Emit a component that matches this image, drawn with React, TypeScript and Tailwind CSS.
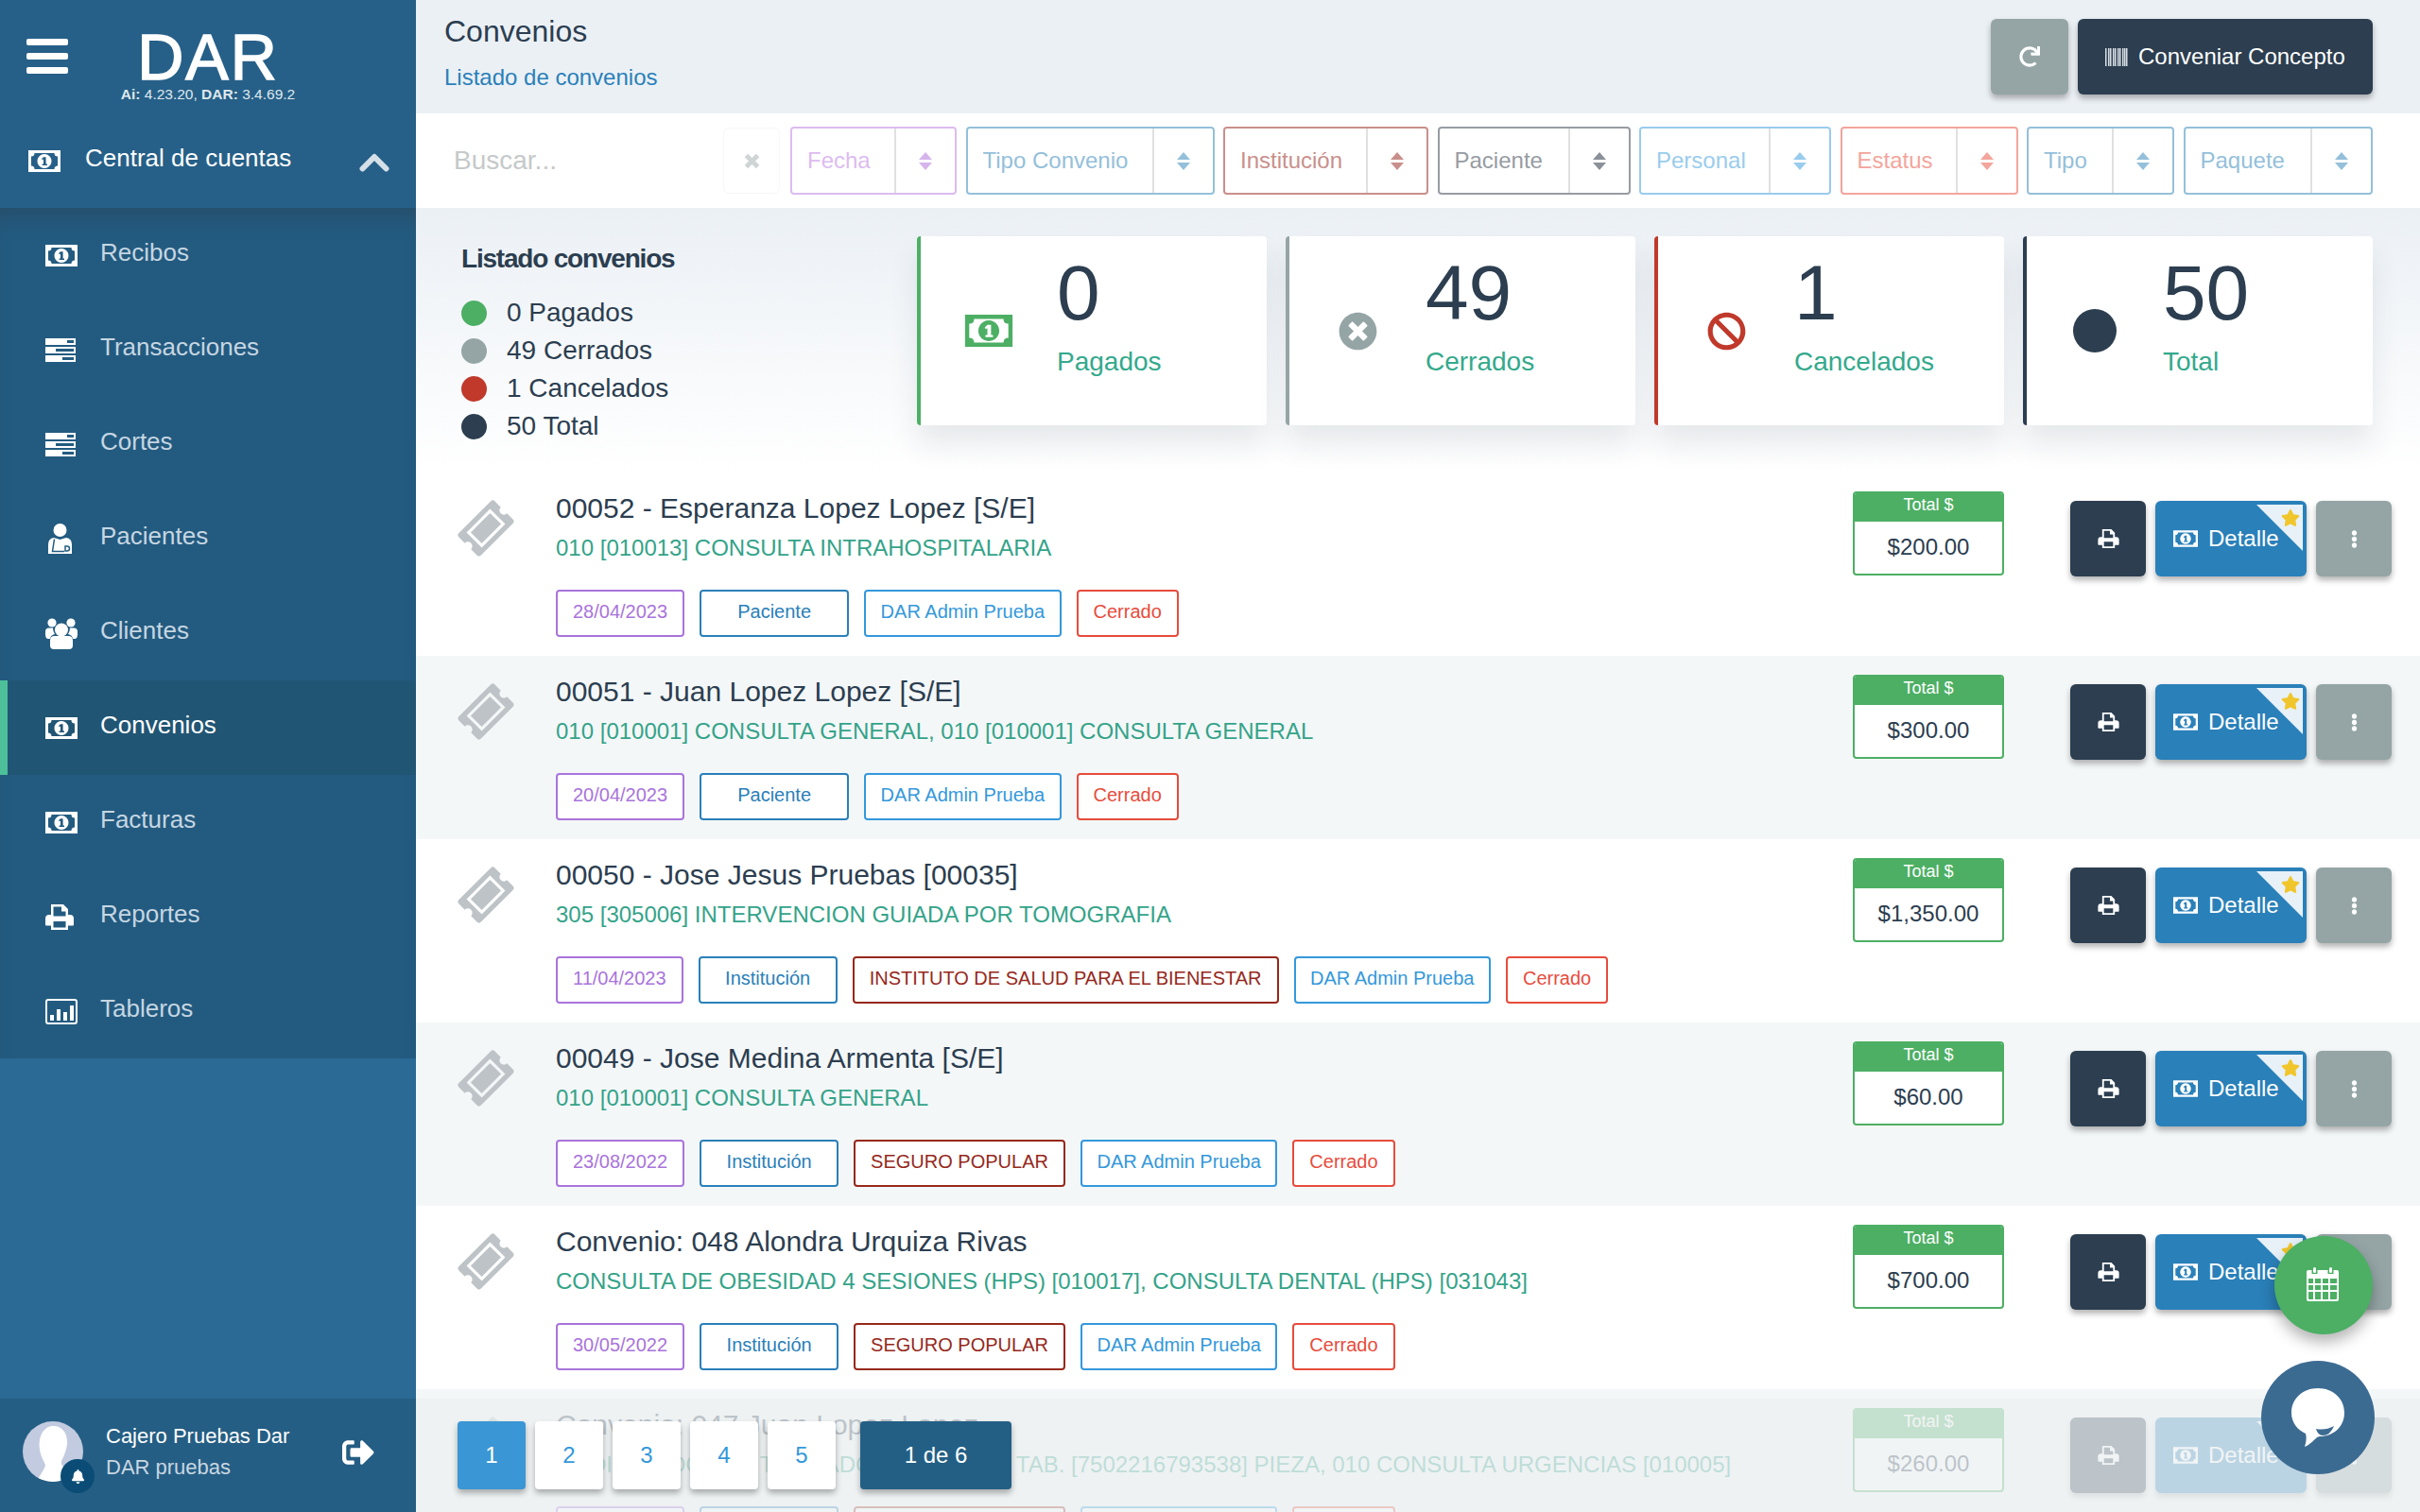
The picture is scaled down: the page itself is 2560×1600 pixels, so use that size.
import { FaBan, FaBell, FaEllipsisV, FaRedo, FaSignOutAlt, FaStar, FaTimesCircle } from "react-icons/fa";

const font = { fontFamily: '"Liberation Sans", Arial, sans-serif' };

const MoneyIcon = ({ className = "" }: { className?: string }) => (
  <svg viewBox="0 0 34 23" className={className} fill="currentColor" fillRule="evenodd">
    <path d="M0 0H34V23H0Z M6.5 3H27.5Q27.5 6.5 31 6.5V16.5Q27.5 16.5 27.5 20H6.5Q6.5 16.5 3 16.5V6.5Q6.5 6.5 6.5 3Z M17 4A7.5 7.5 0 1 1 16.99 4Z M16 7.2H18.6V14.6H20V16H14.6V14.6H16V9.6L14.8 10.3L14.1 9.1Z" />
  </svg>
);

const TasksIcon = () => (
  <svg viewBox="0 0 32 25" className="h-[25px] w-[32px]" fill="white" fillRule="evenodd">
    <path d="M0 0H32V7H0Z M23 2V5H30V2Z M0 9H32V16H0Z M11 11V14H30V11Z M0 18H32V25H0Z M18 20V23H30V20Z" />
  </svg>
);

const PatientIcon = () => (
  <svg viewBox="0 0 25 32" className="ml-[3px] h-[32px] w-[25px]">
    <circle cx="12.5" cy="7" r="7" fill="white" />
    <path d="M0 32V22Q0 16 6 15L12.5 17L19 15Q25 16 25 22V32Z" fill="white" />
    <path d="M6.5 16.5L4.5 29.5H17" fill="none" stroke="#235b80" strokeWidth="1.5" />
    <path d="M18 24H20A2.500 2.500 0 0 1 20 29H18Z" fill="white" stroke="#235b80" strokeWidth="1.5" />
  </svg>
);

const GroupIcon = () => (
  <svg viewBox="0 0 34 33" className="h-[33px] w-[34px]" fill="white">
    <circle cx="7" cy="5" r="4.6" />
    <circle cx="27" cy="5" r="4.6" />
    <circle cx="17" cy="12.5" r="7" />
    <path d="M0 14.5Q0 10.5 4 10.5H8Q8 14 10 17Q5.5 18 5 22H2.5Q0 21 0 18Z" />
    <path d="M34 14.5Q34 10.5 30 10.5H26Q26 14 24 17Q28.5 18 29 22H31.500Q34 21 34 18Z" />
    <path d="M5 24Q5 19 9.500 19H24.500Q29 19 29 24V29Q29 33 25 33H9Q5 33 5 29Z" />
  </svg>
);

const PrintIcon = ({ className = "" }: { className?: string }) => (
  <svg viewBox="0 0 30 27" className={className} fill="currentColor" fillRule="evenodd">
    <path d="M6 0H19L24 5V11H26Q30 11 30 15V21.500Q30 22.500 29 22.500H24V27H6V22.500H1Q0 22.500 0 21.500V15Q0 11 4 11H6Z M8.500 2.500V12.500H21.500V7.500H17V2.500Z M8.500 18V24.500H21.500V18Z" />
  </svg>
);

const ChartIcon = () => (
  <svg viewBox="0 0 34 27" className="h-[27px] w-[34px]" fill="white" fillRule="evenodd">
    <path d="M3 0H31Q34 0 34 3V24Q34 27 31 27H3Q0 27 0 24V3Q0 0 3 0Z M3 2A1 1 0 0 0 2 3V24A1 1 0 0 0 3 25H31A1 1 0 0 0 32 24V3A1 1 0 0 0 31 2Z M5 17H9V23H5Z M12 11H16V23H12Z M19 14H23V23H19Z M26 7H30V23H26Z" />
  </svg>
);

const TicketIcon = () => (
  <svg viewBox="1 1 58 58" className="h-[60px] w-[60px]" fill="#bdc3c7">
    <g transform="rotate(-45 30 30)">
      <path
        fillRule="evenodd"
        d="M7 14H53Q56 14 56 17V25.500A4.500 4.500 0 0 0 56 34.500V43Q56 46 53 46H7Q4 46 4 43V34.500A4.500 4.500 0 0 0 4 25.500V17Q4 14 7 14Z M13 19V41H47V19Z"
      />
      <rect x="16" y="22" width="28" height="16" />
    </g>
  </svg>
);

const Sort = ({ color }: { color: string }) => (
  <svg viewBox="0 0 14 19" className="h-[19px] w-[14px]" style={{ fill: color }}>
    <path d="M7 0L14 8H0Z M0 11H14L7 19Z" />
  </svg>
);

const BarcodeIcon = () => (
  <svg viewBox="0 0 24 19" className="h-[19px] w-[24px]">
    {[0, 3, 5, 8, 10, 13, 15, 18, 20, 22].map((x) => (
      <rect key={x} x={x} y="0" width="1.500" height="19" fill="#d5dde3" />
    ))}
  </svg>
);

const Calendar = () => (
  <svg viewBox="0 0 34 36" className="mb-[3px] mr-[2px] h-[36px] w-[34px]" fill="white" fillRule="evenodd">
    <rect x="7" y="0" width="3" height="6" rx="1.500" />
    <rect x="24" y="0" width="3" height="6" rx="1.500" />
    <path d="M2 3H5.500V7H11.500V3H22.500V7H28.500V3H32Q34 3 34 5V34Q34 36 32 36H2Q0 36 0 34V5Q0 3 2 3Z M2 12V17H7V12Z M9 12V17H15V12Z M17 12V17H23V12Z M25 12V17H32V12Z M2 19V24H7V19Z M9 19V24H15V19Z M17 19V24H23V19Z M25 19V24H32V19Z M2 26V33Q2 34 3 34H7V26Z M9 26V34H15V26Z M17 26V34H23V26Z M25 26V34H31Q32 34 32 33V26Z" />
  </svg>
);

const ChatBubble = () => (
  <svg viewBox="0 0 56 62" className="h-[62px] w-[56px]">
    <path d="M28 0C44 0 56 11 56 26C56 41 44 51 30 51C26 51 23 58 14 62C16 56 16 51 15 48C6 44 0 36 0 26C0 11 12 0 28 0Z" fill="white" />
    <path d="M26 43Q36 45 45 40Q41 50 33 50Q28 50 26 43Z" fill="#3c6b92" />
  </svg>
);

const Avatar = () => (
  <svg viewBox="0 0 64 64" className="h-[64px] w-[64px] rounded-full bg-[#c2cbdf]">
    <path d="M31 5C41 4 48 12 47 24C46 32 43 38 41 42C40 47 44 50 50 53L55 64H14C18 58 22 52 24 47C23 42 19 38 18 30C16 18 21 6 31 5Z" fill="white" />
  </svg>
);

const menu = [
  { label: "Recibos", icon: <MoneyIcon className="h-[23px] w-[34px] text-white" /> },
  { label: "Transacciones", icon: <TasksIcon /> },
  { label: "Cortes", icon: <TasksIcon /> },
  { label: "Pacientes", icon: <PatientIcon /> },
  { label: "Clientes", icon: <GroupIcon /> },
  { label: "Convenios", icon: <MoneyIcon className="h-[23px] w-[34px] text-white" />, active: true },
  { label: "Facturas", icon: <MoneyIcon className="h-[23px] w-[34px] text-white" /> },
  { label: "Reportes", icon: <PrintIcon className="h-[27px] w-[30px] text-white" /> },
  { label: "Tableros", icon: <ChartIcon /> },
];

const filters = [
  { label: "Fecha", w: "w-[176px]", border: "border-[#dcbcf0]", text: "text-[#dcbcf0]", color: "#d5b4ec" },
  { label: "Tipo Convenio", w: "w-[263px]", border: "border-[#94c0da]", text: "text-[#94c0da]", color: "#94c0da" },
  { label: "Institución", w: "w-[217px]", border: "border-[#c98f8b]", text: "text-[#c98f8b]", color: "#c98f8b" },
  { label: "Paciente", w: "w-[204px]", border: "border-[#979ca3]", text: "text-[#979ca3]", color: "#8b9199" },
  { label: "Personal", w: "w-[203px]", border: "border-[#99cced]", text: "text-[#99cced]", color: "#99cced" },
  { label: "Estatus", w: "w-[188px]", border: "border-[#f3a59c]", text: "text-[#f3a59c]", color: "#f3a59c" },
  { label: "Tipo", w: "w-[156px]", border: "border-[#94c0da]", text: "text-[#94c0da]", color: "#94c0da" },
  { label: "Paquete", w: "w-[200px]", border: "border-[#94c0da]", text: "text-[#94c0da]", color: "#94c0da" },
];

const legend = [
  { label: "0 Pagados", color: "bg-[#4caf64]" },
  { label: "49 Cerrados", color: "bg-[#95a5a6]" },
  { label: "1 Cancelados", color: "bg-[#c0392b]" },
  { label: "50 Total", color: "bg-[#2c3e50]" },
];

const cards = [
  { value: "0", label: "Pagados", border: "border-[#4caf64]", icon: <MoneyIcon className="h-[34px] w-[52px] text-[#4caf64]" /> },
  { value: "49", label: "Cerrados", border: "border-[#95a5a6]", icon: <FaTimesCircle className="text-[41px] text-[#95a5a6]" /> },
  { value: "1", label: "Cancelados", border: "border-[#c0392b]", icon: <FaBan className="text-[41px] text-[#c0392b]" /> },
  { value: "50", label: "Total", border: "border-[#2c3e50]", icon: <div className="h-[46px] w-[46px] rounded-full bg-[#2c3e50]" /> },
];

const tagStyles: Record<string, string> = {
  date: "border-[#a974db] text-[#a974db] px-[16px]",
  kind: "border-[#2a80b9] text-[#2a80b9] px-[16px]",
  inst: "border-[#96281b] text-[#96281b] px-[16px]",
  admin: "border-[#3498db] text-[#3498db] px-[15.500px]",
  state: "border-[#e74c3c] text-[#e74c3c] px-[16px]",
};

type Row = {
  title: string;
  sub: string;
  date: string;
  kind: string;
  inst?: string;
  total: string;
};

const rows: Row[] = [
  { title: "00052 - Esperanza Lopez Lopez [S/E]", sub: "010 [010013] CONSULTA INTRAHOSPITALARIA", date: "28/04/2023", kind: "Paciente", total: "$200.00" },
  { title: "00051 - Juan Lopez Lopez [S/E]", sub: "010 [010001] CONSULTA GENERAL, 010 [010001] CONSULTA GENERAL", date: "20/04/2023", kind: "Paciente", total: "$300.00" },
  { title: "00050 - Jose Jesus Pruebas [00035]", sub: "305 [305006] INTERVENCION GUIADA POR TOMOGRAFIA", date: "11/04/2023", kind: "Institución", inst: "INSTITUTO DE SALUD PARA EL BIENESTAR", total: "$1,350.00" },
  { title: "00049 - Jose Medina Armenta [S/E]", sub: "010 [010001] CONSULTA GENERAL", date: "23/08/2022", kind: "Institución", inst: "SEGURO POPULAR", total: "$60.00" },
  { title: "Convenio: 048 Alondra Urquiza Rivas", sub: "CONSULTA DE OBESIDAD 4 SESIONES (HPS) [010017], CONSULTA DENTAL (HPS) [031043]", date: "30/05/2022", kind: "Institución", inst: "SEGURO POPULAR", total: "$700.00" },
  { title: "Convenio: 047 Juan Lopez Lopez", sub: "MEDIA LIDOCAINA TRAMADOL 20 MG SOL TAB. [7502216793538] PIEZA, 010 CONSULTA URGENCIAS [010005]", date: "28/05/2022", kind: "Institución", inst: "SEGURO POPULAR", total: "$260.00" },
];

const Tag = ({ kind, children, className = "" }: { kind: string; children: string; className?: string }) => (
  <div className={`flex h-[50px] items-center justify-center rounded-[4px] border-2 bg-white pb-[4px] text-[20px] ${tagStyles[kind]} ${className}`}>
    {children}
  </div>
);

const ConvenioRow = ({ row, odd }: { row: Row; odd: boolean }) => (
  <div className={`flex h-[194px] shrink-0 items-start pr-[30px] ${odd ? "bg-[#f4f7f8]" : "bg-white"}`}>
    <div className="ml-[44px] mt-[29px] shrink-0">
      <TicketIcon />
    </div>
    <div className="ml-[44px] min-w-0 flex-1 pt-[20px]">
      <div className="text-[30px] leading-[36px] text-[#2c3e50]">{row.title}</div>
      <div className="mt-[9px] text-[24px] leading-[30px] text-[#34a389]">{row.sub}</div>
      <div className="mt-[29px] flex gap-[16px]">
        <Tag kind="date">{row.date}</Tag>
        <Tag kind="kind" className={row.kind === "Paciente" ? "w-[158px]" : "w-[147px]"}>{row.kind}</Tag>
        {row.inst && <Tag kind="inst">{row.inst}</Tag>}
        <Tag kind="admin">DAR Admin Prueba</Tag>
        <Tag kind="state">Cerrado</Tag>
      </div>
    </div>
    <div className="mt-[20px] h-[89px] w-[160px] shrink-0 overflow-hidden rounded-[4px] border-2 border-[#4caf64] bg-white">
      <div className="flex h-[30px] items-center justify-center bg-[#4caf64] pb-[6px] text-[18px] text-white">Total $</div>
      <div className="flex h-[55px] items-center justify-center pb-[2px] text-[24px] text-[#2c3e50]">{row.total}</div>
    </div>
    <div className="ml-[70px] mt-[30px] flex shrink-0 gap-[10px]">
      <div className="flex h-[80px] w-[80px] items-center justify-center rounded-[6px] bg-[#2c3e50] text-white shadow-[0_4px_6px_rgba(0,0,0,0.3)]">
        <PrintIcon className="h-[20px] w-[23px]" />
      </div>
      <div className="relative flex h-[80px] w-[160px] items-center gap-[11px] rounded-[6px] bg-[#2a80b9] pl-[19px] text-[24px] text-white shadow-[0_4px_6px_rgba(0,0,0,0.3)]">
        <MoneyIcon className="h-[18px] w-[26px]" />
        <span>Detalle</span>
        <svg viewBox="0 0 49 49" className="absolute right-[4px] top-[4px] h-[49px] w-[49px]">
          <path d="M0 0H49V49Z" fill="#e8f1f8" />
        </svg>
        <FaStar className="absolute right-[7px] top-[8px] text-[20px] text-[#f1c62c]" />
      </div>
      <div className="flex h-[80px] w-[80px] items-center justify-center rounded-[6px] bg-[#95a5a5] text-white shadow-[0_4px_6px_rgba(0,0,0,0.3)]">
        <FaEllipsisV className="text-[19px]" />
      </div>
    </div>
  </div>
);

export default function App() {
  return (
    <div className="relative flex h-screen w-full overflow-hidden bg-white" style={font}>
      <aside className="flex w-[440px] shrink-0 flex-col bg-[#2a6a95] text-white">
        <div className="bg-[#266088]">
          <div className="flex h-[120px] items-start">
            <div className="ml-[28px] mt-[41px] flex w-[44px] flex-col gap-[8px]">
              <div className="h-[7px] rounded-[2px] bg-white" />
              <div className="h-[7px] rounded-[2px] bg-white" />
              <div className="h-[7px] rounded-[2px] bg-white" />
            </div>
            <div className="ml-[48px] w-[200px] text-center">
              <div className="mt-[36px] text-[68px] leading-[48px] tracking-[2px] text-white [-webkit-text-stroke:1.5px_white]">DAR</div>
              <div className="mt-[6px] text-[15.500px] leading-[20px] text-[#dfe8ee]">
                <b>Ai:</b> 4.23.20, <b>DAR:</b> 3.4.69.2
              </div>
            </div>
          </div>
          <div className="flex h-[100px] items-center pb-[6px] pl-[30px] pr-[28px]">
            <MoneyIcon className="mt-[6px] h-[23px] w-[34px] text-white" />
            <span className="ml-[26px] flex-1 text-[26px] leading-[30px]">Central de cuentas</span>
            <svg viewBox="0 0 32 20" className="mt-[10px] h-[20px] w-[32px]" fill="none" stroke="#d5e0e8" strokeWidth="6" strokeLinecap="round" strokeLinejoin="round">
              <path d="M3.500 16.500L16 4L28.500 16.500" />
            </svg>
          </div>
        </div>
        <nav className="bg-[#235b80] shadow-[inset_0_22px_22px_-12px_rgba(44,62,80,0.45)]">
          {menu.map((item) => (
            <div
              key={item.label}
              className={`flex h-[100px] items-center pl-[48px] text-[26px] ${item.active ? "bg-[#215574] text-white" : "text-[#c6d6e2]"} relative`}
            >
              {item.active && <div className="absolute bottom-0 left-0 top-0 w-[8px] bg-[#4dc09a]" />}
              <div className="flex w-[58px] shrink-0 items-center">{item.icon}</div>
              <span className="pb-[6px]">{item.label}</span>
            </div>
          ))}
        </nav>
        <div className="flex-1" />
        <div className="flex h-[120px] items-start bg-[#255e84] pl-[24px]">
          <div className="relative mt-[24px] h-[64px] w-[64px] shrink-0">
            <Avatar />
            <div className="absolute left-[40px] top-[40px] flex h-[36px] w-[36px] items-center justify-center rounded-full bg-[#0a4c75]">
              <FaBell className="text-[15px] text-white" />
            </div>
          </div>
          <div className="ml-[24px] w-[250px] pt-[26px]">
            <div className="text-[22px] leading-[28px]">Cajero Pruebas Dar</div>
            <div className="mt-[5px] text-[22px] leading-[28px] text-[#c8d7e2]">DAR pruebas</div>
          </div>
          <FaSignOutAlt className="mt-[40px] text-[34px] text-white" />
        </div>
      </aside>

      <main className="flex min-w-0 flex-1 flex-col bg-white">
        <header className="flex h-[120px] shrink-0 justify-between bg-[#ebf0f5] pl-[30px] pr-[50px]">
          <div>
            <div className="pt-[14px] text-[32px] leading-[38px] text-[#2c3e50]">Convenios</div>
            <div className="mt-[15px] text-[24px] leading-[30px] text-[#2a80b9]">Listado de convenios</div>
          </div>
          <div className="flex gap-[10px] pt-[20px]">
            <div className="flex h-[80px] w-[82px] items-center justify-center rounded-[6px] bg-[#95a5a5] text-white shadow-[0_4px_6px_rgba(0,0,0,0.3)]">
              <FaRedo className="text-[22px]" />
            </div>
            <div className="flex h-[80px] w-[312px] items-center gap-[11px] rounded-[6px] bg-[#2c3e50] pl-[29px] text-[24px] text-white shadow-[0_4px_6px_rgba(0,0,0,0.3)]">
              <BarcodeIcon />
              <span>Conveniar Concepto</span>
            </div>
          </div>
        </header>

        <div className="flex h-[100px] shrink-0 items-center bg-white pr-[50px]">
          <div className="w-[325px] pl-[40px] text-[28px] text-[#c5c9c9]">Buscar...</div>
          <div className="flex h-[70px] w-[60px] items-center justify-center rounded-[6px] border border-[#f7f7f7] text-[#cfd4d4]">
            <svg viewBox="0 0 14 14" className="h-[17px] w-[17px]" fill="none" stroke="currentColor" strokeWidth="4">
              <path d="M2 2L12 12M12 2L2 12" />
            </svg>
          </div>
          <div className="ml-[11px] flex gap-[9.500px]">
            {filters.map((f) => (
              <div key={f.label} className={`flex h-[72px] items-center rounded-[4px] border-2 ${f.w} ${f.border}`}>
                <span className={`flex-1 pl-[16px] text-[24px] ${f.text}`}>{f.label}</span>
                <div className="flex h-full w-[64px] items-center justify-center border-l-2 border-[#e0e0e0]">
                  <Sort color={f.color} />
                </div>
              </div>
            ))}
          </div>
        </div>

        <section className="flex h-[280px] shrink-0 bg-gradient-to-b from-[#ebf0f5] to-white pt-[30px] pr-[50px]">
          <div className="flex-1 pl-[48px]">
            <div className="pt-[8px] text-[28px] font-bold leading-[32px] tracking-[-1.200px] text-[#2c3e50]">Listado convenios</div>
            <div className="mt-[21px] flex flex-col">
              {legend.map((l) => (
                <div key={l.label} className="flex h-[40px] items-center gap-[21px]">
                  <div className={`h-[27px] w-[27px] rounded-full ${l.color}`} />
                  <span className="text-[28px] text-[#2c3e50]">{l.label}</span>
                </div>
              ))}
            </div>
          </div>
          <div className="flex gap-[20px]">
            {cards.map((c) => (
              <div key={c.label} className={`flex h-[200px] w-[370px] rounded-[4px] border-l-4 bg-white shadow-[0_20px_30px_rgba(44,62,80,0.1)] ${c.border}`}>
                <div className="flex h-full w-[144px] items-center justify-center">
                  <div className="flex w-[144px] justify-center">{c.icon}</div>
                </div>
                <div>
                  <div className="pt-[18px] text-[82px] leading-[84px] text-[#2c3e50]">{c.value}</div>
                  <div className="mt-[14px] text-[28px] leading-[34px] text-[#34a98c]">{c.label}</div>
                </div>
              </div>
            ))}
          </div>
        </section>

        <div className="flex flex-col">
          {rows.map((row, i) => (
            <ConvenioRow key={row.title} row={row} odd={i % 2 === 1} />
          ))}
        </div>
      </main>

      <div className="absolute bottom-0 left-[440px] right-0 flex h-[120px] items-center bg-[#ecf0f1]/75 pl-[44px]">
        <div className="flex gap-[10px]">
          {["1", "2", "3", "4", "5"].map((n, i) => (
            <div
              key={n}
              className={`flex h-[72px] w-[72px] items-center justify-center rounded-[4px] text-[24px] shadow-[0_4px_6px_rgba(0,0,0,0.3)] ${i === 0 ? "bg-[#3a96d5] text-white" : "bg-white text-[#3498db]"}`}
            >
              {n}
            </div>
          ))}
        </div>
        <div className="ml-[26px] flex h-[72px] w-[160px] items-center justify-center rounded-[4px] bg-[#235f85] text-[24px] text-white shadow-[0_4px_6px_rgba(0,0,0,0.3)]">
          1 de 6
        </div>
      </div>

      <div className="absolute left-[2406px] top-[1308px] flex h-[104px] w-[104px] items-center justify-center rounded-full bg-[#4caf64] shadow-[0_8px_16px_rgba(0,0,0,0.3)]">
        <Calendar />
      </div>
      <div className="absolute left-[2392px] top-[1440px] flex h-[120px] w-[120px] items-center justify-center rounded-full bg-[#3c6b92]">
        <ChatBubble />
      </div>
    </div>
  );
}
